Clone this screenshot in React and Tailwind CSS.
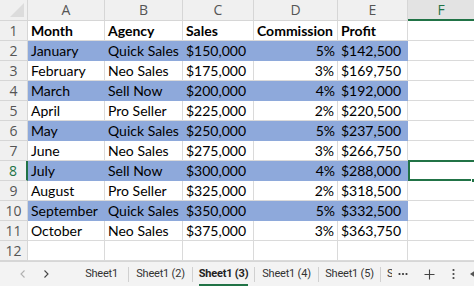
import React from "react";

const rows = [
  ["Month", "Agency", "Sales", "Commission", "Profit", true, false],
  ["January", "Quick Sales", "$150,000", "5%", "$142,500", false, true],
  ["February", "Neo Sales", "$175,000", "3%", "$169,750", false, false],
  ["March", "Sell Now", "$200,000", "4%", "$192,000", false, true],
  ["April", "Pro Seller", "$225,000", "2%", "$220,500", false, false],
  ["May", "Quick Sales", "$250,000", "5%", "$237,500", false, true],
  ["June", "Neo Sales", "$275,000", "3%", "$266,750", false, false],
  ["July", "Sell Now", "$300,000", "4%", "$288,000", false, true],
  ["August", "Pro Seller", "$325,000", "2%", "$318,500", false, false],
  ["September", "Quick Sales", "$350,000", "5%", "$332,500", false, true],
  ["October", "Neo Sales", "$375,000", "3%", "$363,750", false, false],
  ["", "", "", "", "", false, false],
];

const cols = "grid-cols-[28px_77px_78px_71px_84px_70px_1fr]";

function Sep() {
  return <div className="w-px h-[15px] bg-[#d0d0d0] shrink-0" />;
}

export default function App() {
  const font = { fontFamily: "Lato, 'Noto Sans', sans-serif" };
  return (
    <div className="w-[474px] h-[286px] bg-white overflow-hidden flex flex-col" style={font}>
      {/* column header */}
      <div className={`grid ${cols} h-[21px] bg-[#f0f0f0] text-[14px] text-[#555] shrink-0`} style={{ fontFamily: "'Open Sans', sans-serif" }}>
        <div className="relative border-r border-b border-[#d6d6d6]">
          <div className="absolute right-[3px] bottom-[3px] w-0 h-0 border-l-[14px] border-l-transparent border-b-[14px] border-b-[#dcdcdc]" />
        </div>
        {["A", "B", "C", "D", "E"].map((c) => (
          <div key={c} className="flex items-center justify-center border-r border-b border-[#d6d6d6] leading-none">{c}</div>
        ))}
        <div className="flex items-center justify-center border-b-2 border-[#217346] bg-[#e3e3e3] text-[#217346] leading-none">F</div>
      </div>
      {rows.map((r, i) => {
        const [a, b, c, d, e, bold, blue] = r;
        const sel = i === 7;
        const cell = `h-[20px] flex items-center px-[3px] whitespace-nowrap overflow-hidden text-[14px] text-black ${bold ? "font-bold" : ""} ${blue ? "bg-[#8ea9db] border-b border-[#8ea9db]" : "border-b border-r border-[#dadada]"}`;
        return (
          <div key={i} className={`grid ${cols} h-[20px] shrink-0`}>
            <div
              className={`flex items-center justify-center text-[14px] leading-none bg-[#f0f0f0] border-b border-[#d6d6d6] ${sel ? "text-[#217346] bg-[#e3e3e3] border-r-2 border-r-[#217346]" : "text-[#555] border-r border-r-[#d6d6d6]"}`}
              style={{ fontFamily: "'Open Sans', sans-serif" }}
            >
              {i + 1}
            </div>
            <div className={cell}>{a}</div>
            <div className={cell}>{b}</div>
            <div className={`${cell}`}>{c}</div>
            <div className={`${cell} ${bold ? "" : "justify-end"}`}>{d}</div>
            <div className={cell}>{e}</div>
            <div className={`relative h-[20px] ${sel ? "" : "border-b border-[#dadada]"}`}>
              {sel && (
                <>
                  <div className="absolute left-[0px] top-[-1px] right-[-2px] bottom-[0px] border-2 border-[#217346]" />
                  <div className="absolute right-[-2px] bottom-[-2px] w-[5px] h-[5px] bg-[#217346] border border-white" />
                </>
              )}
            </div>
          </div>
        );
      })}
      {/* tab bar */}
      <div className="flex-1 flex items-center bg-[#f3f3f3] border-t border-[#d6d6d6] text-[11px] tracking-[-0.2px] text-[#333] whitespace-nowrap" style={{ fontFamily: "Roboto, 'Noto Sans', sans-serif" }}>
        <div className="w-[26px] shrink-0 flex justify-end text-[#b0b0b0]">
          <svg width="7" height="10" viewBox="0 0 7 10"><path d="M5.5 1.5 L2 5 L5.5 8.5" fill="none" stroke="currentColor" strokeWidth="1.1" /></svg>
        </div>
        <div className="w-[24px] shrink-0 flex justify-end text-[#444]">
          <svg width="7" height="10" viewBox="0 0 7 10"><path d="M1.5 1.5 L5 5 L1.5 8.5" fill="none" stroke="currentColor" strokeWidth="1.1" /></svg>
        </div>
        <div className="w-[78px] shrink-0 flex justify-end pr-[10px]">Sheet1</div>
        <Sep />
        <div className="w-[63px] shrink-0 flex justify-center">Sheet1 (2)</div>
        <Sep />
        <div className="w-[61px] shrink-0 flex justify-center">
          <div className="relative font-bold text-[#222]">
            Sheet1 (3)
            <div className="absolute left-0 right-0 bottom-[-4px] h-[2px] bg-[#217346]" />
          </div>
        </div>
        <Sep />
        <div className="w-[63px] shrink-0 flex justify-center">Sheet1 (4)</div>
        <Sep />
        <div className="w-[61px] shrink-0 flex justify-center">Sheet1 (5)</div>
        <Sep />
        <div className="w-[5px] ml-[6px] overflow-hidden shrink-0">S</div>
        <div className="ml-[6px] w-[12px] flex items-center shrink-0">
          <svg width="10" height="4" viewBox="0 0 10 4"><circle cx="1.5" cy="2" r="1.1" fill="#333" /><circle cx="5" cy="2" r="1.1" fill="#333" /><circle cx="8.5" cy="2" r="1.1" fill="#333" /></svg>
        </div>
        <div className="ml-[14px] text-[#444] shrink-0 flex">
          <svg width="11" height="11" viewBox="0 0 11 11"><path d="M5.5 0.5 V10.5 M0.5 5.5 H10.5" stroke="currentColor" strokeWidth="1.1" /></svg>
        </div>
        <div className="ml-[17px] shrink-0 flex">
          <svg width="3" height="12" viewBox="0 0 3 12"><circle cx="1.5" cy="2" r="1.1" fill="#444" /><circle cx="1.5" cy="6" r="1.1" fill="#444" /><circle cx="1.5" cy="10" r="1.1" fill="#444" /></svg>
        </div>
        <div className="ml-[15px] shrink-0 flex">
          <svg width="6" height="8" viewBox="0 0 6 8"><path d="M6 0 L0 4 L6 8 Z" fill="#555" /></svg>
        </div>
      </div>
    </div>
  );
}
